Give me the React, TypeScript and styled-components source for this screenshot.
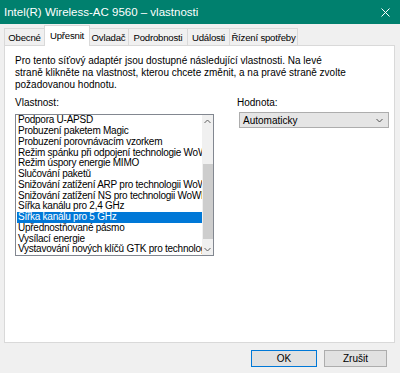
import React from "react";
import styled, { createGlobalStyle } from "styled-components";

const GlobalStyle = createGlobalStyle`
  html, body { margin: 0; padding: 0; background: #f0f0f0; }
  body {
    font-family: "Liberation Sans", Arial, sans-serif;
    font-size: 10px;
    color: #000;
  }
  * { box-sizing: border-box; }
`;

const Window = styled.div`
  width: 400px;
  height: 373px;
  display: flex;
  flex-direction: column;
  background: #f0f0f0;
  overflow: hidden;
`;

const TitleBar = styled.div`
  height: 24px;
  flex: none;
  background: #00806e;
  color: #fff;
  display: flex;
  align-items: center;
  padding-left: 4px;
  font-size: 11.5px;
`;

const Title = styled.div`
  flex: 1;
  white-space: nowrap;
`;

const CloseButton = styled.div`
  width: 26px;
  height: 24px;
  display: flex;
  align-items: center;
  justify-content: center;
  margin-right: 2px;
`;

const Body = styled.div`
  flex: 1;
  display: flex;
  flex-direction: column;
  padding: 0 5px 0 4px;
`;

const TabStrip = styled.div`
  height: 21px;
  display: flex;
  align-items: flex-end;
`;

const Tab = styled.div<{ $active?: boolean; $w: number }>`
  position: relative;
  width: ${(p) => p.$w}px;
  height: ${(p) => (p.$active ? "21px" : "17px")};
  margin: ${(p) => (p.$active ? "0 -1px -1px -1px" : "0 0 0 -1px")};
  z-index: ${(p) => (p.$active ? 1 : 0)};
  padding-bottom: ${(p) => (p.$active ? "2px" : "0")};
  border: 1px solid #d9d9d9;
  border-bottom: none;
  background: ${(p) => (p.$active ? "#fff" : "#f0f0f0")};
  display: flex;
  align-items: center;
  justify-content: center;
  white-space: nowrap;
  font-size: 9.6px;
  letter-spacing: -0.2px;
  &:first-child { margin-left: 0; }
`;

const Panel = styled.div`
  height: 298px;
  flex: none;
  background: #fff;
  border: 1px solid #d9d9d9;
  padding: 9px 10px 0 10px;
  display: flex;
  flex-direction: column;
`;

const Description = styled.p`
  margin: 0;
  line-height: 11.75px;
  white-space: nowrap;
`;

const Columns = styled.div`
  display: grid;
  grid-template-columns: 199px 152px;
  column-gap: 23px;
  margin-top: 7px;
`;

const Column = styled.div`
  display: flex;
  flex-direction: column;
`;

const Label = styled.div`
  line-height: 12px;
  height: 12px;
`;

const ListBox = styled.div`
  margin-top: 5px;
  height: 142px;
  border: 1px solid #828790;
  background: #fff;
  display: flex;
`;

const Items = styled.div`
  flex: 1;
  min-width: 0;
  overflow: hidden;
  padding-left: 1px;
`;

const Item = styled.div<{ $selected?: boolean }>`
  height: 10.75px;
  line-height: 10.75px;
  padding-left: 1px;
  white-space: nowrap;
  overflow: hidden;
  letter-spacing: -0.25px;
  background: ${(p) => (p.$selected ? "#0078d7" : "transparent")};
  color: ${(p) => (p.$selected ? "#fff" : "#000")};
`;

const ScrollBar = styled.div`
  width: 11px;
  flex: none;
  background: #f0f0f0;
  display: flex;
  flex-direction: column;
`;

const ScrollArrow = styled.div`
  height: 12px;
  flex: none;
  display: flex;
  align-items: center;
  justify-content: center;
`;

const Track = styled.div`
  flex: 1;
  position: relative;
`;

const Thumb = styled.div`
  position: absolute;
  left: 1px;
  right: 0;
  background: #cdcdcd;
`;

const Combo = styled.div`
  margin-top: 3px;
  margin-left: 2px;
  height: 16px;
  border: 1px solid #adadad;
  background: #e5e5e5;
  display: flex;
  align-items: center;
  padding: 0 5px 0 3px;
`;

const ComboText = styled.div`
  flex: 1;
`;

const Footer = styled.div`
  display: flex;
  justify-content: flex-end;
  gap: 7px;
  padding: 7px 8px 0 0;
`;

const Button = styled.div<{ $default?: boolean; $w: number }>`
  width: ${(p) => p.$w}px;
  height: 17px;
  border: 1px solid ${(p) => (p.$default ? "#0078d7" : "#adadad")};
  background: #e1e1e1;
  display: flex;
  align-items: center;
  justify-content: center;
`;

const Chevron = ({ up, color = "#606060" }: { up?: boolean; color?: string }) => (
  <svg width="7" height="5" viewBox="0 0 7 5">
    <path
      d={up ? "M0.5 4 L3.5 1 L6.5 4" : "M0.5 1 L3.5 4 L6.5 1"}
      fill="none"
      stroke={color}
      strokeWidth="1"
    />
  </svg>
);

const tabs: { label: string; w: number }[] = [
  { label: "Obecné", w: 41 },
  { label: "Upřesnit", w: 46 },
  { label: "Ovladač", w: 41 },
  { label: "Podrobnosti", w: 60 },
  { label: "Události", w: 43 },
  { label: "Řízení spotřeby", w: 69 },
];

const properties = [
  "Podpora U-APSD",
  "Probuzení paketem Magic",
  "Probuzení porovnávacím vzorkem",
  "Režim spánku při odpojení technologie WoWLAN",
  "Režim úspory energie MIMO",
  "Slučování paketů",
  "Snižování zatížení ARP pro technologii WoWLAN",
  "Snižování zatížení NS pro technologii WoWLAN",
  "Šířka kanálu pro 2,4 GHz",
  "Šířka kanálu pro 5 GHz",
  "Upřednostňované pásmo",
  "Vysílací energie",
  "Vystavování nových klíčů GTK pro technologii WoWLAN",
];

export default function App() {
  const selected = 9;
  const trackH = 116;
  const thumbTop = 37;
  const thumbH = 75;
  return (
    <Window>
      <GlobalStyle />
      <TitleBar>
        <Title>Intel(R) Wireless-AC 9560 – vlastnosti</Title>
        <CloseButton>
          <svg width="9" height="9" viewBox="0 0 9 9">
            <path d="M0.5 0.5 L8.5 8.5 M8.5 0.5 L0.5 8.5" stroke="#fff" strokeWidth="1" />
          </svg>
        </CloseButton>
      </TitleBar>
      <Body>
        <TabStrip>
          {tabs.map((t) => (
            <Tab key={t.label} $w={t.w} $active={t.label === "Upřesnit"}>
              {t.label}
            </Tab>
          ))}
        </TabStrip>
        <Panel>
          <Description>
            Pro tento síťový adaptér jsou dostupné následující vlastnosti. Na levé
            <br />
            straně klikněte na vlastnost, kterou chcete změnit, a na pravé straně zvolte
            <br />
            požadovanou hodnotu.
          </Description>
          <Columns>
            <Column>
              <Label>Vlastnost:</Label>
              <ListBox>
                <Items>
                  {properties.map((p, i) => (
                    <Item key={p} $selected={i === selected}>
                      {p}
                    </Item>
                  ))}
                </Items>
                <ScrollBar>
                  <ScrollArrow>
                    <Chevron up />
                  </ScrollArrow>
                  <Track style={{ height: trackH }}>
                    <Thumb style={{ top: thumbTop, height: thumbH }} />
                  </Track>
                  <ScrollArrow>
                    <Chevron />
                  </ScrollArrow>
                </ScrollBar>
              </ListBox>
            </Column>
            <Column>
              <Label>Hodnota:</Label>
              <Combo>
                <ComboText>Automaticky</ComboText>
                <Chevron color="#505050" />
              </Combo>
            </Column>
          </Columns>
        </Panel>
        <Footer>
          <Button $default $w={66}>OK</Button>
          <Button $w={63}>Zrušit</Button>
        </Footer>
      </Body>
    </Window>
  );
}
